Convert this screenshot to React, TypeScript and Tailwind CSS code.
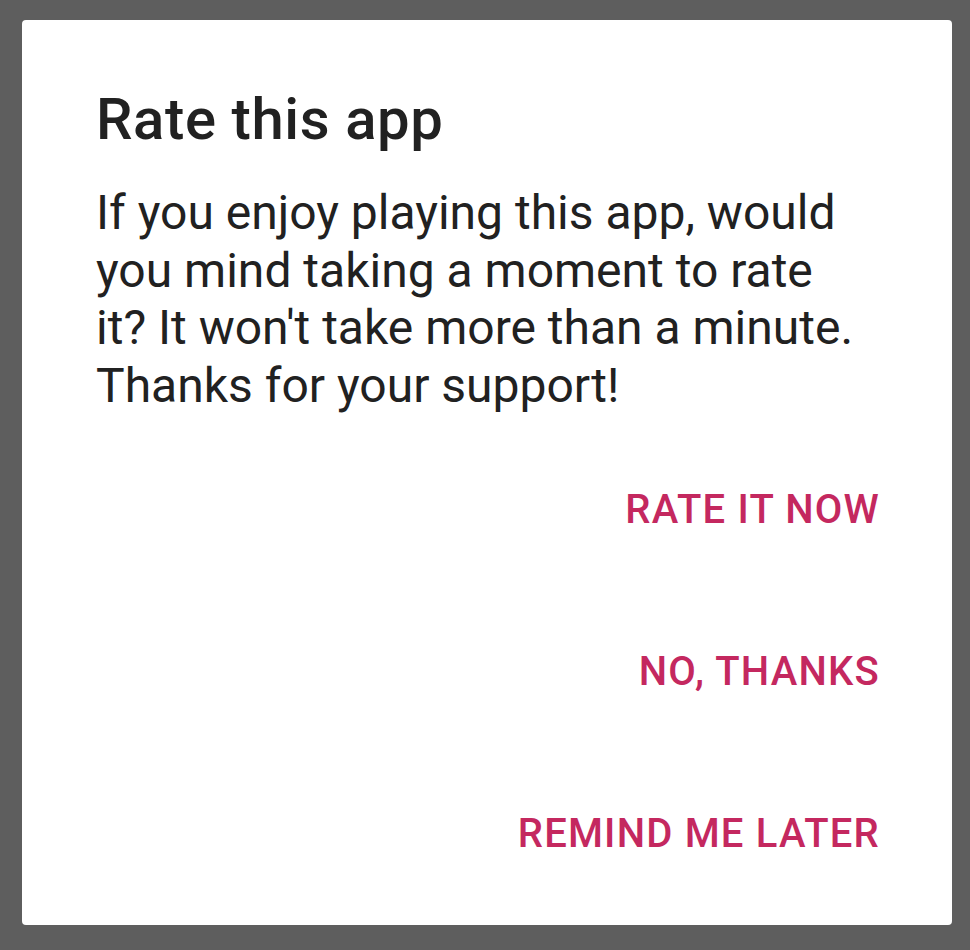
import React from "react";

export default function App() {
  const font = { fontFamily: "Roboto, 'Noto Sans', Arial, sans-serif" };
  return (
    <div className="min-h-[950px] w-[970px] bg-[#5e5e5e] pt-[20px] pl-[22px]" style={font}>
      <div className="w-[930px] h-[905px] rounded-[4px] bg-white pl-[74px] pr-[73px] pt-[67px] flex flex-col">
        <h1 className="text-[58px] leading-[64px] font-medium tracking-[0.6px] text-[#212121]">Rate this app</h1>
        <p className="mt-[33px] w-[765px] text-[48px] leading-[57.6px] text-[#212121]">
          If you enjoy playing this app, would you mind taking a moment to rate it? It won't take more than a minute. Thanks for your support!
        </p>
        <div className="mt-[72px] flex flex-col items-end gap-[114px]">
          <button className="text-[40px] leading-[48px] font-medium tracking-[1.2px] -mr-[1px] text-[#c4285f] uppercase">Rate it now</button>
          <button className="text-[40px] leading-[48px] font-medium tracking-[1.2px] -mr-[1px] text-[#c4285f] uppercase">No, thanks</button>
          <button className="text-[40px] leading-[48px] font-medium tracking-[1.2px] -mr-[1px] text-[#c4285f] uppercase">Remind me later</button>
        </div>
      </div>
    </div>
  );
}
